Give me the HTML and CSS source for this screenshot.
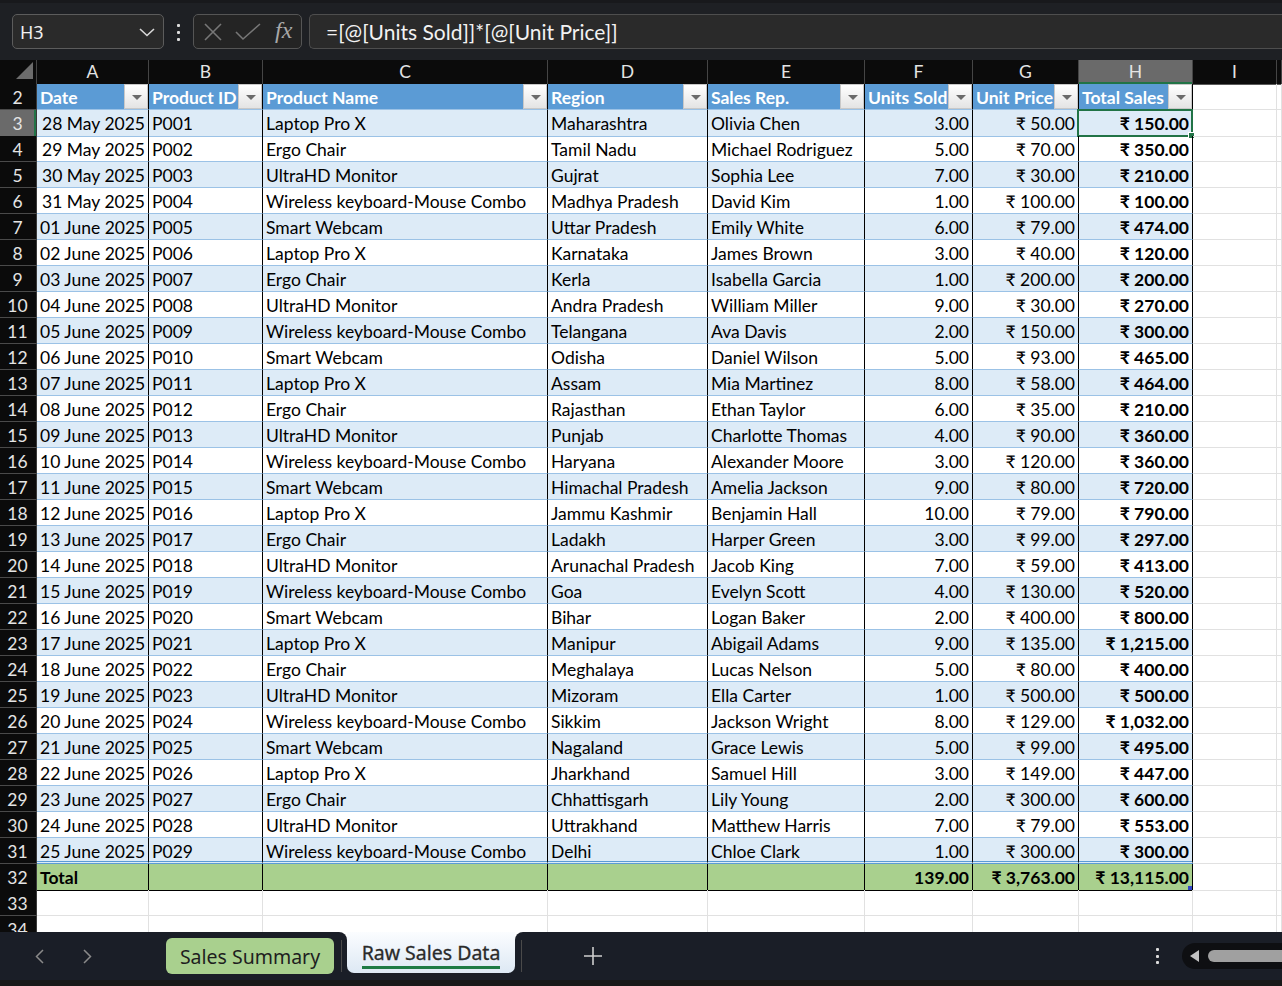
FILE: index.html
```html
<!DOCTYPE html>
<html lang="en">
<head>
<meta charset="utf-8">
<title>Raw Sales Data</title>
<link rel="stylesheet" href="styles.css">
</head>
<body>
<div class="app">
  <div class="topbar">
    <div class="namebox"><span class="nb-text">H3</span>
      <svg class="nb-chev" width="16" height="10" viewBox="0 0 16 10"><polyline points="1,2 8,8.5 15,2" fill="none" stroke="#d8d8d8" stroke-width="1.6"/></svg>
    </div>
    <div class="vdots"><i></i><i></i><i></i></div>
    <div class="fxbox">
      <svg width="20" height="20" viewBox="0 0 20 20"><path d="M2 2 L18 18 M18 2 L2 18" stroke="#777" stroke-width="1.6" fill="none"/></svg>
      <svg width="26" height="20" viewBox="0 0 26 20"><polyline points="1,10 8,17 25,2" stroke="#777" stroke-width="1.6" fill="none"/></svg>
      <span class="fx">fx</span>
    </div>
    <div class="formula">=[@[Units Sold]]*[@[Unit Price]]</div>
  </div>

  <div class="sheet">
    <div class="r hdr">
      <div class="corner"><span class="tri"></span></div>
      <div class="ch">A</div><div class="ch">B</div><div class="ch">C</div><div class="ch">D</div><div class="ch">E</div><div class="ch">F</div><div class="ch">G</div><div class="ch sel">H</div><div class="ch">I</div><div class="ch"></div>
    </div>
    <div class="r th">
      <div class="rh">2</div>
      <div class="t">Date<span class="flt"></span></div>
      <div class="t">Product ID<span class="flt"></span></div>
      <div class="t">Product Name<span class="flt"></span></div>
      <div class="t">Region<span class="flt"></span></div>
      <div class="t">Sales Rep.<span class="flt"></span></div>
      <div class="t">Units Sold<span class="flt"></span></div>
      <div class="t">Unit Price<span class="flt"></span></div>
      <div class="t">Total Sales<span class="flt"></span></div>
      <div class="g"></div><div class="g"></div>
    </div>
    <div class="r b"><div class="rh sel">3</div><div class="t n">28 May 2025</div><div class="t">P001</div><div class="t">Laptop Pro X</div><div class="t">Maharashtra</div><div class="t">Olivia Chen</div><div class="t n">3.00</div><div class="t n">₹ 50.00</div><div class="t n s cur">₹ 150.00<span class="selbox"><span class="handle"></span></span></div><div class="g"></div><div class="g"></div></div>
    <div class="r"><div class="rh">4</div><div class="t n">29 May 2025</div><div class="t">P002</div><div class="t">Ergo Chair</div><div class="t">Tamil Nadu</div><div class="t">Michael Rodriguez</div><div class="t n">5.00</div><div class="t n">₹ 70.00</div><div class="t n s">₹ 350.00</div><div class="g"></div><div class="g"></div></div>
    <div class="r b"><div class="rh">5</div><div class="t n">30 May 2025</div><div class="t">P003</div><div class="t">UltraHD Monitor</div><div class="t">Gujrat</div><div class="t">Sophia Lee</div><div class="t n">7.00</div><div class="t n">₹ 30.00</div><div class="t n s">₹ 210.00</div><div class="g"></div><div class="g"></div></div>
    <div class="r"><div class="rh">6</div><div class="t n">31 May 2025</div><div class="t">P004</div><div class="t">Wireless keyboard-Mouse Combo</div><div class="t">Madhya Pradesh</div><div class="t">David Kim</div><div class="t n">1.00</div><div class="t n">₹ 100.00</div><div class="t n s">₹ 100.00</div><div class="g"></div><div class="g"></div></div>
    <div class="r b"><div class="rh">7</div><div class="t n">01 June 2025</div><div class="t">P005</div><div class="t">Smart Webcam</div><div class="t">Uttar Pradesh</div><div class="t">Emily White</div><div class="t n">6.00</div><div class="t n">₹ 79.00</div><div class="t n s">₹ 474.00</div><div class="g"></div><div class="g"></div></div>
    <div class="r"><div class="rh">8</div><div class="t n">02 June 2025</div><div class="t">P006</div><div class="t">Laptop Pro X</div><div class="t">Karnataka</div><div class="t">James Brown</div><div class="t n">3.00</div><div class="t n">₹ 40.00</div><div class="t n s">₹ 120.00</div><div class="g"></div><div class="g"></div></div>
    <div class="r b"><div class="rh">9</div><div class="t n">03 June 2025</div><div class="t">P007</div><div class="t">Ergo Chair</div><div class="t">Kerla</div><div class="t">Isabella Garcia</div><div class="t n">1.00</div><div class="t n">₹ 200.00</div><div class="t n s">₹ 200.00</div><div class="g"></div><div class="g"></div></div>
    <div class="r"><div class="rh">10</div><div class="t n">04 June 2025</div><div class="t">P008</div><div class="t">UltraHD Monitor</div><div class="t">Andra Pradesh</div><div class="t">William Miller</div><div class="t n">9.00</div><div class="t n">₹ 30.00</div><div class="t n s">₹ 270.00</div><div class="g"></div><div class="g"></div></div>
    <div class="r b"><div class="rh">11</div><div class="t n">05 June 2025</div><div class="t">P009</div><div class="t">Wireless keyboard-Mouse Combo</div><div class="t">Telangana</div><div class="t">Ava Davis</div><div class="t n">2.00</div><div class="t n">₹ 150.00</div><div class="t n s">₹ 300.00</div><div class="g"></div><div class="g"></div></div>
    <div class="r"><div class="rh">12</div><div class="t n">06 June 2025</div><div class="t">P010</div><div class="t">Smart Webcam</div><div class="t">Odisha</div><div class="t">Daniel Wilson</div><div class="t n">5.00</div><div class="t n">₹ 93.00</div><div class="t n s">₹ 465.00</div><div class="g"></div><div class="g"></div></div>
    <div class="r b"><div class="rh">13</div><div class="t n">07 June 2025</div><div class="t">P011</div><div class="t">Laptop Pro X</div><div class="t">Assam</div><div class="t">Mia Martinez</div><div class="t n">8.00</div><div class="t n">₹ 58.00</div><div class="t n s">₹ 464.00</div><div class="g"></div><div class="g"></div></div>
    <div class="r"><div class="rh">14</div><div class="t n">08 June 2025</div><div class="t">P012</div><div class="t">Ergo Chair</div><div class="t">Rajasthan</div><div class="t">Ethan Taylor</div><div class="t n">6.00</div><div class="t n">₹ 35.00</div><div class="t n s">₹ 210.00</div><div class="g"></div><div class="g"></div></div>
    <div class="r b"><div class="rh">15</div><div class="t n">09 June 2025</div><div class="t">P013</div><div class="t">UltraHD Monitor</div><div class="t">Punjab</div><div class="t">Charlotte Thomas</div><div class="t n">4.00</div><div class="t n">₹ 90.00</div><div class="t n s">₹ 360.00</div><div class="g"></div><div class="g"></div></div>
    <div class="r"><div class="rh">16</div><div class="t n">10 June 2025</div><div class="t">P014</div><div class="t">Wireless keyboard-Mouse Combo</div><div class="t">Haryana</div><div class="t">Alexander Moore</div><div class="t n">3.00</div><div class="t n">₹ 120.00</div><div class="t n s">₹ 360.00</div><div class="g"></div><div class="g"></div></div>
    <div class="r b"><div class="rh">17</div><div class="t n">11 June 2025</div><div class="t">P015</div><div class="t">Smart Webcam</div><div class="t">Himachal Pradesh</div><div class="t">Amelia Jackson</div><div class="t n">9.00</div><div class="t n">₹ 80.00</div><div class="t n s">₹ 720.00</div><div class="g"></div><div class="g"></div></div>
    <div class="r"><div class="rh">18</div><div class="t n">12 June 2025</div><div class="t">P016</div><div class="t">Laptop Pro X</div><div class="t">Jammu Kashmir</div><div class="t">Benjamin Hall</div><div class="t n">10.00</div><div class="t n">₹ 79.00</div><div class="t n s">₹ 790.00</div><div class="g"></div><div class="g"></div></div>
    <div class="r b"><div class="rh">19</div><div class="t n">13 June 2025</div><div class="t">P017</div><div class="t">Ergo Chair</div><div class="t">Ladakh</div><div class="t">Harper Green</div><div class="t n">3.00</div><div class="t n">₹ 99.00</div><div class="t n s">₹ 297.00</div><div class="g"></div><div class="g"></div></div>
    <div class="r"><div class="rh">20</div><div class="t n">14 June 2025</div><div class="t">P018</div><div class="t">UltraHD Monitor</div><div class="t">Arunachal Pradesh</div><div class="t">Jacob King</div><div class="t n">7.00</div><div class="t n">₹ 59.00</div><div class="t n s">₹ 413.00</div><div class="g"></div><div class="g"></div></div>
    <div class="r b"><div class="rh">21</div><div class="t n">15 June 2025</div><div class="t">P019</div><div class="t">Wireless keyboard-Mouse Combo</div><div class="t">Goa</div><div class="t">Evelyn Scott</div><div class="t n">4.00</div><div class="t n">₹ 130.00</div><div class="t n s">₹ 520.00</div><div class="g"></div><div class="g"></div></div>
    <div class="r"><div class="rh">22</div><div class="t n">16 June 2025</div><div class="t">P020</div><div class="t">Smart Webcam</div><div class="t">Bihar</div><div class="t">Logan Baker</div><div class="t n">2.00</div><div class="t n">₹ 400.00</div><div class="t n s">₹ 800.00</div><div class="g"></div><div class="g"></div></div>
    <div class="r b"><div class="rh">23</div><div class="t n">17 June 2025</div><div class="t">P021</div><div class="t">Laptop Pro X</div><div class="t">Manipur</div><div class="t">Abigail Adams</div><div class="t n">9.00</div><div class="t n">₹ 135.00</div><div class="t n s">₹ 1,215.00</div><div class="g"></div><div class="g"></div></div>
    <div class="r"><div class="rh">24</div><div class="t n">18 June 2025</div><div class="t">P022</div><div class="t">Ergo Chair</div><div class="t">Meghalaya</div><div class="t">Lucas Nelson</div><div class="t n">5.00</div><div class="t n">₹ 80.00</div><div class="t n s">₹ 400.00</div><div class="g"></div><div class="g"></div></div>
    <div class="r b"><div class="rh">25</div><div class="t n">19 June 2025</div><div class="t">P023</div><div class="t">UltraHD Monitor</div><div class="t">Mizoram</div><div class="t">Ella Carter</div><div class="t n">1.00</div><div class="t n">₹ 500.00</div><div class="t n s">₹ 500.00</div><div class="g"></div><div class="g"></div></div>
    <div class="r"><div class="rh">26</div><div class="t n">20 June 2025</div><div class="t">P024</div><div class="t">Wireless keyboard-Mouse Combo</div><div class="t">Sikkim</div><div class="t">Jackson Wright</div><div class="t n">8.00</div><div class="t n">₹ 129.00</div><div class="t n s">₹ 1,032.00</div><div class="g"></div><div class="g"></div></div>
    <div class="r b"><div class="rh">27</div><div class="t n">21 June 2025</div><div class="t">P025</div><div class="t">Smart Webcam</div><div class="t">Nagaland</div><div class="t">Grace Lewis</div><div class="t n">5.00</div><div class="t n">₹ 99.00</div><div class="t n s">₹ 495.00</div><div class="g"></div><div class="g"></div></div>
    <div class="r"><div class="rh">28</div><div class="t n">22 June 2025</div><div class="t">P026</div><div class="t">Laptop Pro X</div><div class="t">Jharkhand</div><div class="t">Samuel Hill</div><div class="t n">3.00</div><div class="t n">₹ 149.00</div><div class="t n s">₹ 447.00</div><div class="g"></div><div class="g"></div></div>
    <div class="r b"><div class="rh">29</div><div class="t n">23 June 2025</div><div class="t">P027</div><div class="t">Ergo Chair</div><div class="t">Chhattisgarh</div><div class="t">Lily Young</div><div class="t n">2.00</div><div class="t n">₹ 300.00</div><div class="t n s">₹ 600.00</div><div class="g"></div><div class="g"></div></div>
    <div class="r"><div class="rh">30</div><div class="t n">24 June 2025</div><div class="t">P028</div><div class="t">UltraHD Monitor</div><div class="t">Uttrakhand</div><div class="t">Matthew Harris</div><div class="t n">7.00</div><div class="t n">₹ 79.00</div><div class="t n s">₹ 553.00</div><div class="g"></div><div class="g"></div></div>
    <div class="r b last"><div class="rh">31</div><div class="t n">25 June 2025</div><div class="t">P029</div><div class="t">Wireless keyboard-Mouse Combo</div><div class="t">Delhi</div><div class="t">Chloe Clark</div><div class="t n">1.00</div><div class="t n">₹ 300.00</div><div class="t n s">₹ 300.00</div><div class="g"></div><div class="g"></div></div>
    <div class="r tot"><div class="rh">32</div><div class="t">Total</div><div class="t"></div><div class="t"></div><div class="t"></div><div class="t"></div><div class="t n">139.00</div><div class="t n">₹ 3,763.00</div><div class="t n cur">₹ 13,115.00<span class="rsz"></span></div><div class="g"></div><div class="g"></div></div>
    <div class="r"><div class="rh">33</div><div class="g"></div><div class="g"></div><div class="g"></div><div class="g"></div><div class="g"></div><div class="g"></div><div class="g"></div><div class="g"></div><div class="g"></div><div class="g"></div></div>
    <div class="r"><div class="rh">34</div><div class="g"></div><div class="g"></div><div class="g"></div><div class="g"></div><div class="g"></div><div class="g"></div><div class="g"></div><div class="g"></div><div class="g"></div><div class="g"></div></div>
  </div>

  <div class="bottom">
    <div class="tabrow">
      <div class="bl">
        <svg class="nav nav-l" width="9" height="15" viewBox="0 0 9 15"><polyline points="8,1 1.5,7.5 8,14" fill="none" stroke="#8a8a8a" stroke-width="1.5"/></svg>
        <svg class="nav nav-r" width="9" height="15" viewBox="0 0 9 15"><polyline points="1,1 7.5,7.5 1,14" fill="none" stroke="#8a8a8a" stroke-width="1.5"/></svg>
        <div class="tab green">Sales Summary</div>
        <span class="sep"></span>
      </div>
      <div class="activecol"><div class="tab active"><span class="ul">Raw Sales Data</span></div></div>
      <div class="br">
        <span class="sep"></span>
        <svg class="plus" width="18" height="18" viewBox="0 0 18 18"><path d="M9 0 V18 M0 9 H18" stroke="#cfcfcf" stroke-width="1.6"/></svg>
        <div class="vdots bdots"><i></i><i></i><i></i></div>
        <div class="hscroll"><span class="stri"></span><span class="thumb"></span></div>
      </div>
    </div>
    <div class="strip"></div>
  </div>
</div>
</body>
</html>
```
FILE: styles.css
```css
* { box-sizing: border-box; }
html, body { margin: 0; padding: 0; }
body {
  width: 1282px;
  height: 986px;
  overflow: hidden;
  background: #ffffff;
  font-family: Lato, "Noto Sans", "DejaVu Sans", sans-serif;
  color: #000;
}
.app { display: flex; flex-direction: column; height: 986px; }

/* ---------- top bar ---------- */
.topbar {
  flex: none;
  height: 60px;
  background: #1e2024;
  border-top: 3px solid #18191c;
  display: flex;
  align-items: flex-start;
  padding: 11px 0 0 12px;
}
.namebox {
  width: 152px;
  height: 35px;
  border: 1px solid #5c5c5c;
  border-radius: 5px;
  background: #2a2a2a;
  display: flex;
  align-items: center;
  padding: 0 0 0 7px;
  font-family: "Noto Sans", sans-serif;
  font-size: 18px;
  color: #f0f0f0;
}
.nb-text { flex: 1; }
.nb-chev { margin-right: 8px; }
.vdots {
  display: flex;
  flex-direction: column;
  gap: 4px;
  margin: 10px 0 0 13px;
}
.vdots i { display: block; width: 3px; height: 3px; background: #dcdcdc; border-radius: 1px; }
.fxbox {
  margin-left: 13px;
  width: 109px;
  height: 35px;
  border: 1px solid #555;
  border-radius: 5px;
  background: #242424;
  display: flex;
  align-items: center;
  gap: 12px;
  padding-left: 9px;
}
.fx {
  font-family: "Liberation Serif", serif;
  font-style: italic;
  font-size: 24px;
  color: #a8a8a8;
  margin-left: 2px;
  margin-top: -3px;
}
.formula {
  margin-left: 7px;
  flex: 1;
  height: 35px;
  border: 1px solid #4e4e4e;
  border-right: none;
  border-radius: 5px 0 0 5px;
  background: #2a2a2a;
  color: #f2f2f2;
  font-size: 21px;
  line-height: 33px;
  padding-left: 16px;
}

/* ---------- sheet ---------- */
.sheet { flex: none; height: 872px; overflow: hidden; background: #fff; }
.r {
  display: grid;
  grid-template-columns: 37px 112px 114px 285px 160px 157px 108px 106px 114px 84px 1fr;
  height: 26px;
  font-size: 17.5px;
}
.r > div {
  position: relative;
  white-space: nowrap;
  overflow: hidden;
  line-height: 25px;
  padding-top: 1px;
  border-right: 1px solid #e1e1e1;
  border-bottom: 1px solid #e1e1e1;
}
.r.hdr { height: 24px; }
.hdr > div {
  background: #0b0b0b;
  color: #e4e4e4;
  text-align: center;
  line-height: 24px;
  padding-top: 0;
  border-right: 1px solid #454545;
  border-bottom: 1px solid #5a5a5a;
}
.hdr > .ch.sel { background: #6a6a6a; box-shadow: inset 0 -2px 0 #217346; overflow: visible; }
.corner { overflow: visible; }
.corner .tri {
  position: absolute;
  left: 16px;
  top: 2px;
  width: 0; height: 0;
  border-left: 17px solid transparent;
  border-bottom: 17px solid #6c6c6c;
}
.r > .rh {
  background: #0b0b0b;
  color: #e4e4e4;
  text-align: center;
  padding-right: 1px;
  border-right: 1px solid #3a3a3a;
  border-bottom: 1px solid #4a4a4a;
}
.r > .rh.sel { background: #6a6a6a; box-shadow: inset -2px 0 0 #217346; }

.r > .t {
  padding-left: 3px;
  padding-right: 3px;
  border-right: 1px solid #000;
  border-bottom: 1px solid #9bc2e6;
}
.r > .n { text-align: right; }
.r > .s { font-weight: 700; }
.b > .t { background: #ddebf7; }

.th > .t {
  background: #5b9bd5;
  color: #fff;
  font-weight: 700;
}
.flt {
  position: absolute;
  right: 0;
  top: 0;
  width: 24px;
  height: 25px;
  background: linear-gradient(#ffffff, #e4e4e4);
  border: 1px solid #c8c8c8;
}
.flt::after {
  content: "";
  position: absolute;
  left: 7px;
  top: 10px;
  border-left: 5px solid transparent;
  border-right: 5px solid transparent;
  border-top: 5px solid #6a6a6a;
}
.last > .t { border-bottom: 3px double #5b9bd5; line-height: 23px; padding-top: 2px; }
.tot > .t {
  background: #a9d08e;
  font-weight: 700;
  border-bottom: 1px solid #000;
}
.r > .cur { overflow: visible; }
.selbox {
  position: absolute;
  left: -2px;
  top: -1px;
  right: -1px;
  bottom: -1px;
  border: 2px solid #217346;
  pointer-events: none;
}
.handle {
  position: absolute;
  right: -4px;
  bottom: -4px;
  width: 7px;
  height: 7px;
  background: #217346;
  border: 1px solid #fff;
}
.rsz {
  position: absolute;
  right: 0;
  bottom: 0;
  width: 4px;
  height: 4px;
  background: #3146c8;
}

/* ---------- bottom bar ---------- */
.bottom { flex: none; height: 54px; display: flex; flex-direction: column; background: #fff; }
.tabrow { height: 48px; display: flex; }
.bl {
  width: 347px;
  flex: none;
  background: #1a1e27;
  border-top-right-radius: 8px;
  display: flex;
  align-items: center;
}
.nav-l { margin-left: 35px; }
.nav-r { margin-left: 39px; }
.tab {
  font-family: "Noto Sans", sans-serif;
  font-size: 19.5px;
}
.tab.green {
  margin-left: 74px;
  width: 168px;
  height: 36px;
  background: #a9d08e;
  border-radius: 6px;
  color: #1e1e1e;
  text-align: center;
  line-height: 36px;
  padding-top: 1px;
}
.sep { display: block; width: 1px; height: 32px; background: #4a4a4a; }
.bl .sep { margin-left: 7px; }
.activecol { width: 168px; flex: none; background: #1a1e27; }
.tab.active {
  height: 41px;
  background: linear-gradient(#fbfdff, #dde8f4);
  border-radius: 0 0 7px 7px;
  text-align: center;
  color: #2a2a2a;
  padding-top: 7px;
}
.ul {
  display: inline-block;
  line-height: 26px;
  border-bottom: 3px solid #1e7b45;
  -webkit-text-stroke: 0.3px #2a2a2a;
}
.br {
  flex: 1;
  background: #1a1e27;
  border-top-left-radius: 8px;
  display: flex;
  align-items: center;
  overflow: hidden;
}
.br .sep { margin-left: 6px; }
.plus { margin-left: 62px; }
.bdots { margin: 0 0 0 auto; gap: 3.5px; }
.hscroll {
  margin-left: 23px;
  width: 130px;
  flex: none;
  height: 26px;
  border-radius: 13px;
  background: #0e0f12;
  display: flex;
  align-items: center;
  margin-right: -30px;
}
.stri {
  margin-left: 8px;
  width: 0; height: 0;
  border-top: 6px solid transparent;
  border-bottom: 6px solid transparent;
  border-right: 9px solid #c2c2c2;
}
.thumb {
  margin-left: 9px;
  flex: 1;
  height: 12px;
  border-radius: 6px;
  background: #a0a0a0;
}
.strip { height: 6px; background: #181818; }
```
